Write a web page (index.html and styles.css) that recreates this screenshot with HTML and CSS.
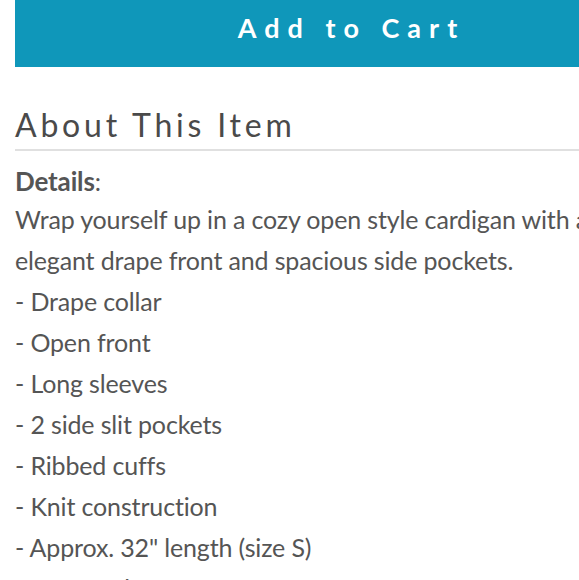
FILE: index.html
```html
<!DOCTYPE html>
<html>
<head>
<meta charset="utf-8">
<link rel="stylesheet" href="styles.css">
</head>
<body>
<div class="page">
  <button class="cart-btn">Add to Cart</button>
  <h2 class="about-title">About This Item</h2>
  <div class="desc">
    <p class="details-label"><strong>Details</strong>:</p>
    <p class="desc-text">Wrap yourself up in a cozy open style cardigan with an elegant drape front and spacious side pockets.</p>
    <ul class="features">
      <li>- Drape collar</li>
      <li>- Open front</li>
      <li>- Long sleeves</li>
      <li>- 2 side slit pockets</li>
      <li>- Ribbed cuffs</li>
      <li>- Knit construction</li>
      <li>- Approx. 32" length (size S)</li>
      <li>- Imported</li>
    </ul>
  </div>
</div>
</body>
</html>
```
FILE: styles.css
```css
html, body {
  margin: 0;
  padding: 0;
  background: #ffffff;
  overflow: hidden;
}
.page {
  width: 665px;
  margin-left: 15px;
}
.cart-btn {
  display: block;
  width: 100%;
  height: 67px;
  padding: 0 0 12px 0;
  border: none;
  background: #0f97ba;
  color: #ffffff;
  font-family: "Lato", sans-serif;
  font-weight: 700;
  font-size: 27px;
  letter-spacing: 8px;
  text-indent: 8px;
}
.about-title {
  margin: 38px 0 0 0;
  padding-bottom: 4px;
  border-bottom: 2px solid #e0e0e0;
  font-family: "Lato", sans-serif;
  font-weight: 400;
  font-size: 32px;
  line-height: 40px;
  letter-spacing: 3.8px;
  color: #4a4a4a;
}
.desc {
  font-family: "Lato", sans-serif;
  font-size: 25px;
  line-height: 41px;
  letter-spacing: -0.15px;
  color: #555555;
  font-variant-ligatures: none;
}
.details-label {
  margin: 12px 0 0 0;
  line-height: 36px;
}
.details-label strong {
  font-weight: 700;
  font-size: 26px;
}
.desc-text {
  margin: 0;
}
.features {
  list-style: none;
  margin: 0;
  padding: 0;
}
```
